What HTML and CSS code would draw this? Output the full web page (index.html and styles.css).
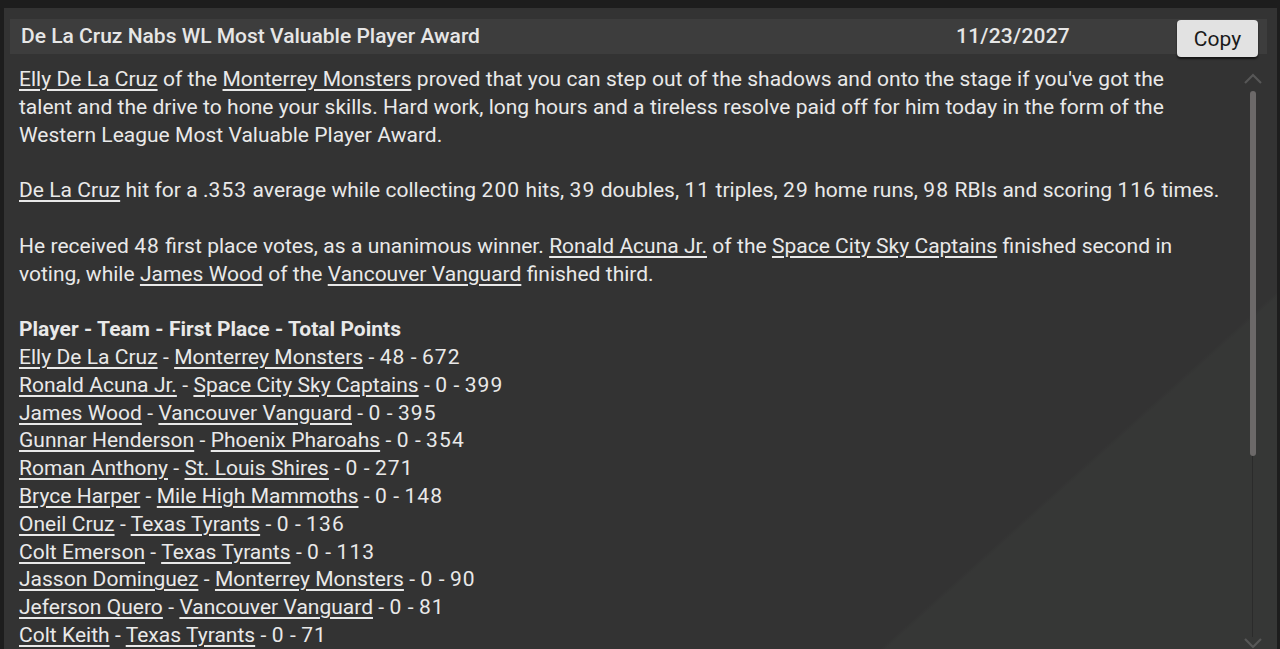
FILE: index.html
```html
<!DOCTYPE html>
<html>
<head>
<meta charset="utf-8">
<link rel="stylesheet" href="styles.css">
</head>
<body>
<div class="panel">
  <div class="header">
    <div class="title">De La Cruz Nabs WL Most Valuable Player Award</div>
    <div class="date">11/23/2027</div>
    <button class="copy">Copy</button>
  </div>
  <div class="main">
    <div class="article">
      <p><a>Elly De La Cruz</a> of the <a>Monterrey Monsters</a> proved that you can step out of the shadows and onto the stage if you've got the<br>talent and the drive to hone your skills. Hard work, long hours and a tireless resolve paid off for him today in the form of the<br>Western League Most Valuable Player Award.</p>
      <p><a>De La Cruz</a> hit for a .<span class="n">353</span> average while collecting <span class="n">200</span> hits, <span class="n">39</span> doubles, <span class="n">11</span> triples, <span class="n">29</span> home runs, <span class="n">98</span> RBIs and scoring <span class="n">116</span> times.</p>
      <p>He received <span class="n">48</span> first place votes, as a unanimous winner. <a>Ronald Acuna Jr.</a> of the <a>Space City Sky Captains</a> finished second in<br>voting, while <a>James Wood</a> of the <a>Vancouver Vanguard</a> finished third.</p>
      <p><b>Player - Team - First Place - Total Points</b><br>
      <a>Elly De La Cruz</a> - <a>Monterrey Monsters</a> - <span class="n">48</span> - <span class="n">672</span><br>
      <a>Ronald Acuna Jr.</a> - <a>Space City Sky Captains</a> - <span class="n">0</span> - <span class="n">399</span><br>
      <a>James Wood</a> - <a>Vancouver Vanguard</a> - <span class="n">0</span> - <span class="n">395</span><br>
      <a>Gunnar Henderson</a> - <a>Phoenix Pharoahs</a> - <span class="n">0</span> - <span class="n">354</span><br>
      <a>Roman Anthony</a> - <a>St. Louis Shires</a> - <span class="n">0</span> - <span class="n">271</span><br>
      <a>Bryce Harper</a> - <a>Mile High Mammoths</a> - <span class="n">0</span> - <span class="n">148</span><br>
      <a>Oneil Cruz</a> - <a>Texas Tyrants</a> - <span class="n">0</span> - <span class="n">136</span><br>
      <a>Colt Emerson</a> - <a>Texas Tyrants</a> - <span class="n">0</span> - <span class="n">113</span><br>
      <a>Jasson Dominguez</a> - <a>Monterrey Monsters</a> - <span class="n">0</span> - <span class="n">90</span><br>
      <a>Jeferson Quero</a> - <a>Vancouver Vanguard</a> - <span class="n">0</span> - <span class="n">81</span><br>
      <a>Colt Keith</a> - <a>Texas Tyrants</a> - <span class="n">0</span> - <span class="n">71</span></p>
    </div>
    <div class="scrollbar">
      <svg class="arrow" width="20" height="12" viewBox="0 0 20 12"><path d="M2 10 L10 2 L18 10" fill="none" stroke="#575757" stroke-width="2.2"/></svg>
      <div class="track"><div class="thumb"></div></div>
      <svg class="arrow" width="20" height="12" viewBox="0 0 20 12"><path d="M2 2 L10 10 L18 2" fill="none" stroke="#575757" stroke-width="2.2"/></svg>
    </div>
  </div>
</div>
</body>
</html>
```

FILE: styles.css
```css
html, body {
  margin: 0;
  padding: 0;
  height: 100%;
  overflow: hidden;
}
body {
  background: #1d1d1d;
  font-family: Roboto, "Liberation Sans", sans-serif;
}
.panel {
  margin: 8px 3px 0 4px;
  height: 641px;
  background: linear-gradient(138deg, #333333 0%, #333333 80%, #363736 80.3%, #363736 100%);
  padding: 11px 10px 0 6px;
  box-sizing: border-box;
  display: flex;
  flex-direction: column;
  overflow: hidden;
}
.header {
  height: 35px;
  flex: none;
  background: #3d3d3d;
  display: flex;
  align-items: flex-start;
  color: #e6e6e6;
  font-size: 21px;
  font-weight: 500;
}
.title {
  line-height: 35px;
  padding-left: 11px;
  width: 873px;
  box-sizing: border-box;
  white-space: nowrap;
}
.date {
  line-height: 35px;
  width: 260px;
  text-align: center;
  letter-spacing: 0.2px;
}
.copy {
  margin-left: 34px;
  margin-top: 1px;
  width: 81px;
  height: 37px;
  border: none;
  border-radius: 4px;
  background: #e2e2e2;
  color: #1a1a1a;
  font-family: Roboto, "Liberation Sans", sans-serif;
  font-size: 21px;
  font-weight: 400;
  box-shadow: 0 2px 2px rgba(0,0,0,0.6);
  padding: 0;
}
.main {
  flex: 1;
  display: flex;
  min-height: 0;
}
.article {
  flex: 1;
  padding: 12px 0 0 9px;
  color: #e9e9e9;
  font-size: 21px;
  line-height: 27.8px;
  white-space: nowrap;
  overflow: hidden;
  word-spacing: 0.15px;
}
.article p {
  margin: 0 0 27.8px 0;
}
.article b {
  font-weight: 700;
}
.article a {
  text-decoration: underline;
  text-decoration-thickness: 1.5px;
  text-underline-offset: 3px;
}
.n {
  letter-spacing: 1.1px;
}
.scrollbar {
  width: 20px;
  flex: none;
  display: flex;
  flex-direction: column;
  align-items: center;
  padding-top: 19px;
  margin-right: 4px;
}
.arrow {
  flex: none;
}
.track {
  flex: 1;
  width: 6px;
  margin: 6px 0 0;
  background: linear-gradient(to right, transparent 2px, #2b2b2b 2px, #2b2b2b 3px, transparent 3px);
}
.thumb {
  height: 365px;
  width: 6px;
  border-radius: 3px;
  background: #6c6969;
}
```
